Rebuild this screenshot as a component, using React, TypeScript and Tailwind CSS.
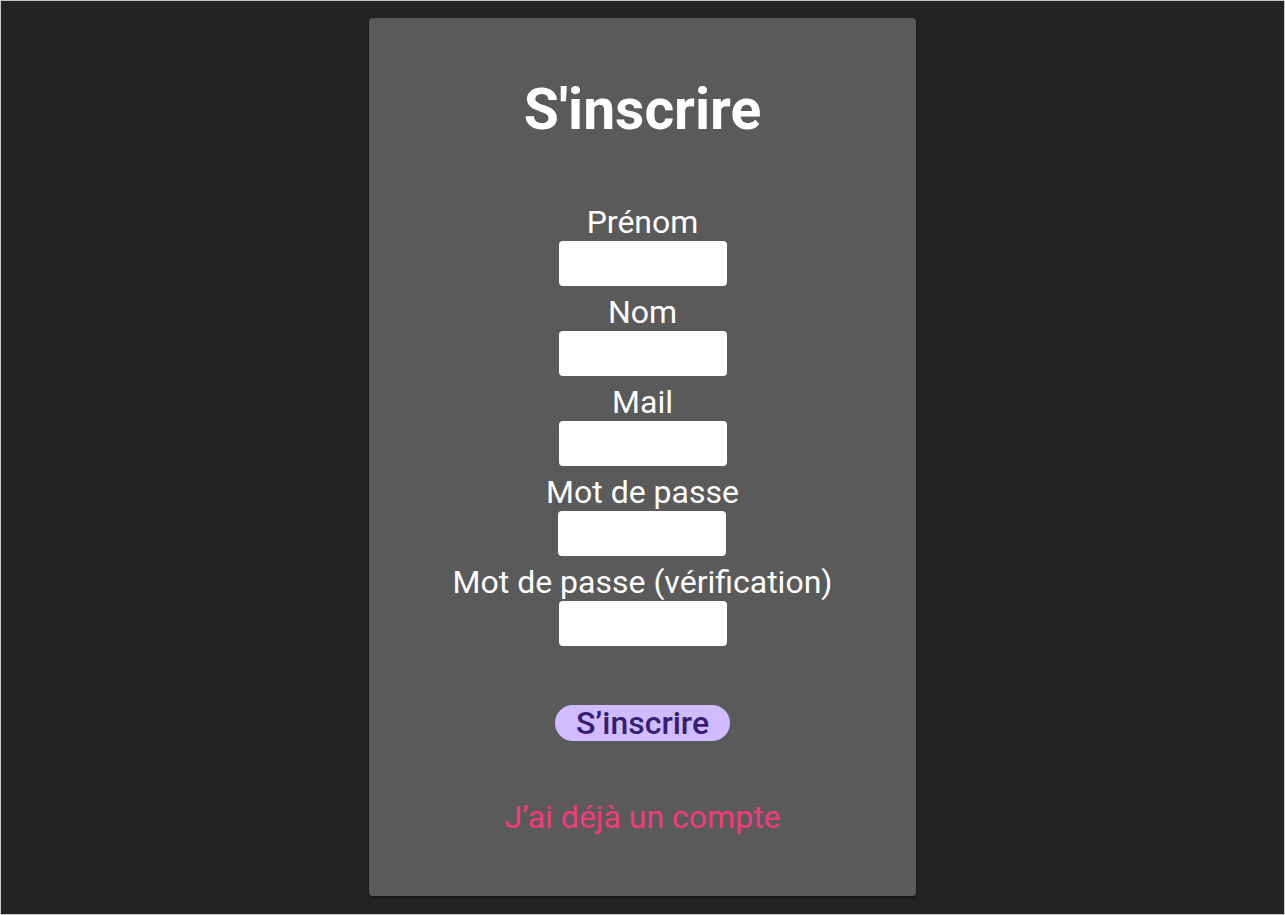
import React from "react";

const fields = ["Prénom", "Nom", "Mail", "Mot de passe", "Mot de passe (vérification)"];

export default function App() {
  return (
    <div className="h-[915px] w-full border border-[#c9c9c9] bg-[#232323] flex justify-center pt-[17px] font-['Roboto',sans-serif]">
      <div className="w-[547px] h-[878px] bg-[#5a5a5a] rounded-[4px] shadow-[0_1px_3px_rgba(0,0,0,0.5)] flex flex-col items-center text-white">
        <h1 className="mt-[59px] text-[57px] font-bold leading-[66px]">S'inscrire</h1>
        <div className="mt-[61px] flex flex-col items-center">
          {fields.map((f, i) => (
            <div key={f} className={`flex flex-col items-center ${i > 0 ? "mt-[8px]" : ""}`}>
              <label className="text-[32px] leading-[37px]">{f}</label>
              <input type="text" className="w-[168px] h-[45px] bg-white rounded-[4px] outline-none" />
            </div>
          ))}
        </div>
        <button className="mt-[59px] h-[36px] px-[21px] rounded-full bg-[#d0bcff] text-[#381e72] text-[32px] font-medium leading-[36px]">
          S’inscrire
        </button>
        <a className="mt-[58px] text-[32px] leading-[36px] text-[#f33b7b] cursor-pointer">J’ai déjà un compte</a>
      </div>
    </div>
  );
}
